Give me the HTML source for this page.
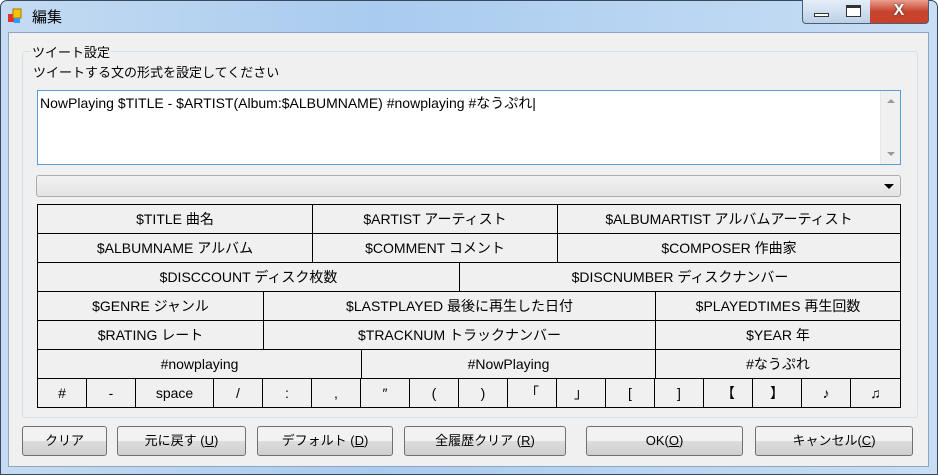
<!DOCTYPE html>
<html><head><meta charset="utf-8"><style>
*{box-sizing:border-box;margin:0;padding:0}
body{width:938px;height:475px;overflow:hidden;background:#fff;font-family:"Liberation Sans","Noto Sans CJK JP",sans-serif;font-size:13px;color:#000;position:relative}
.frame{position:absolute;left:0;top:0;width:938px;height:475px;border:1px solid #3a4a5e;border-radius:7px 7px 0 0;background:linear-gradient(90deg,#c4dbf2,#a9cbef 40%,#b9d5f2 70%,#c8def4)}
.client{position:absolute;left:8px;top:32px;width:921px;height:435px;background:#f0f0f0;border:1px solid #8ea6c0}
.title{position:absolute;left:32px;top:6px;font-size:15px}
.ico{position:absolute;left:8px;top:8px;width:14px;height:16px}
.wb{position:absolute;top:0;height:24px;border:1px solid #4c5d74;border-top:none}
.abs{position:absolute}
.grp{position:absolute;left:22px;top:51px;width:896px;height:367px;border:1px solid #d5dfe5;border-radius:3px}
.lbl{position:absolute;background:#f0f0f0;padding:0 1px}
.tb{position:absolute;left:37px;top:90px;width:864px;height:75px;background:#fff;border:1px solid #5b9bd5;border-color:#569de5}
.combo{position:absolute;left:36px;top:175px;width:865px;height:22px;border:1px solid #acacac;border-radius:3px;background:linear-gradient(#f2f2f2,#e3e3e3)}
table{position:absolute;left:37px;border-collapse:collapse;table-layout:fixed}
td{border:1px solid #000;height:29px;text-align:center;padding:0;font-size:14px;white-space:nowrap;overflow:hidden}
.btn{position:absolute;top:426px;height:30px;border:1px solid #707070;border-radius:3px;background:linear-gradient(#f2f2f2 50%,#dddddd 50%,#cfcfcf);text-align:center;line-height:28px;font-size:13px}
</style></head><body>
<div class="frame"></div>
<svg class="ico" viewBox="0 0 14 16"><rect x="0" y="6" width="6" height="8" fill="#d33"/><rect x="5" y="1" width="8" height="9" fill="#f5c400" stroke="#a70" stroke-width="1"/><rect x="6" y="10" width="6" height="5" fill="#39f"/></svg>
<div class="title">編集</div>
<div class="wb" style="left:802px;width:37px;border-radius:0 0 0 4px;background:linear-gradient(#e4eef9,#bcd0e6)"><div class="abs" style="left:11px;top:13px;width:15px;height:4px;border:1px solid #333;background:#fff"></div></div>
<div class="wb" style="left:838px;width:33px;border-left:none;background:linear-gradient(#e4eef9,#bcd0e6)"><div class="abs" style="left:8px;top:5px;width:15px;height:12px;border:1px solid #333;border-top-width:3px;background:#fff"></div></div>
<div class="wb" style="left:870px;width:59px;border-left:none;border-radius:0 0 4px 0;background:linear-gradient(#e8a08f,#c7442e 50%,#c8402a);color:#fff;font-weight:bold;font-size:16px;text-align:center;line-height:22px;text-shadow:0 0 2px #333">X</div>
<div class="client"></div>
<div class="grp"></div>
<div class="lbl" style="left:31px;top:42px">ツイート設定</div>
<div class="abs" style="left:33px;top:62px">ツイートする文の形式を設定してください</div>
<div class="tb"><div class="abs" style="left:2px;top:2px;font-size:14px">NowPlaying $TITLE - $ARTIST(Album:$ALBUMNAME) #nowplaying #なうぷれ|</div>
<div class="abs" style="right:0;top:0;width:20px;height:73px;background:#f0f0f0;border-left:1px solid #e6e6e6"><div class="abs" style="left:6px;top:8px;border:4px solid transparent;border-bottom:4px solid #999;border-top:none"></div><div class="abs" style="left:6px;top:61px;border:4px solid transparent;border-top:4px solid #999;border-bottom:none"></div></div></div>
<div class="combo"><div class="abs" style="right:6px;top:8px;border:5px solid transparent;border-top:5px solid #000;border-bottom:none"></div></div>
<table style="top:204px;width:864px"><tr><td style="width:275px">$TITLE 曲名</td><td style="width:245px">$ARTIST アーティスト</td><td>$ALBUMARTIST アルバムアーティスト</td></tr>
<tr><td>$ALBUMNAME アルバム</td><td>$COMMENT コメント</td><td>$COMPOSER 作曲家</td></tr></table>
<table style="top:262px;width:864px"><tr><td style="width:422px">$DISCCOUNT ディスク枚数</td><td>$DISCNUMBER ディスクナンバー</td></tr></table>
<table style="top:291px;width:864px"><tr><td style="width:226px">$GENRE ジャンル</td><td style="width:392px">$LASTPLAYED 最後に再生した日付</td><td>$PLAYEDTIMES 再生回数</td></tr>
<tr><td>$RATING レート</td><td>$TRACKNUM トラックナンバー</td><td>$YEAR 年</td></tr></table>
<table style="top:349px;width:864px"><tr><td style="width:324px">#nowplaying</td><td style="width:294px">#NowPlaying</td><td>#なうぷれ</td></tr></table>
<table style="top:378px;width:864px"><tr>
<td style="width:49px">#</td><td style="width:49px">-</td><td style="width:78px">space</td><td style="width:49px">/</td><td style="width:49px">:</td><td style="width:49px">,</td><td style="width:49px">″</td><td style="width:49px">(</td><td style="width:49px">)</td><td style="width:49px">「</td><td style="width:49px">」</td><td style="width:49px">[</td><td style="width:49px">]</td><td style="width:49px">【</td><td style="width:49px">】</td><td style="width:49px">♪</td><td>♫</td></tr></table>
<div class="btn" style="left:22px;width:85px">クリア</div>
<div class="btn" style="left:117px;width:129px">元に戻す (<u>U</u>)</div>
<div class="btn" style="left:257px;width:136px">デフォルト (<u>D</u>)</div>
<div class="btn" style="left:404px;width:162px">全履歴クリア (<u>R</u>)</div>
<div class="btn" style="left:586px;width:157px">OK(<u>O</u>)</div>
<div class="btn" style="left:755px;width:158px">キャンセル(<u>C</u>)</div>
</body></html>
